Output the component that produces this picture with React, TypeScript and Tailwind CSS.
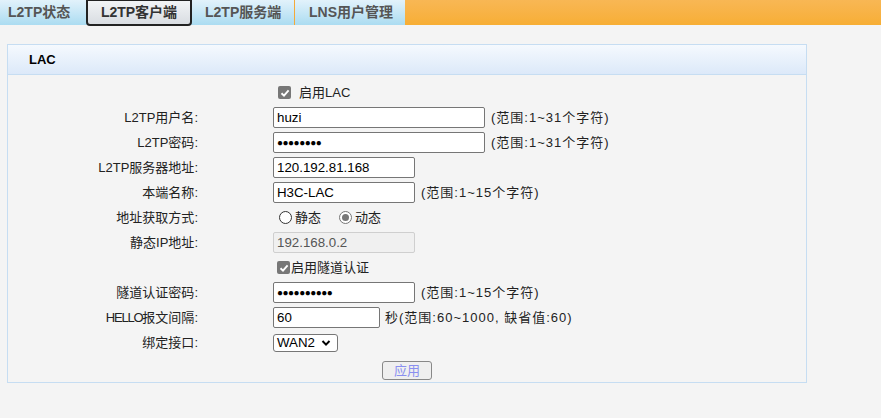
import React from 'react';

const font = "font-['Segoe_UI','Liberation_Sans','Noto_Sans_CJK_SC',sans-serif]";

const Check: React.FC = () => (
  <span className="w-[13px] h-[13px] rounded-[2px] bg-[#777] flex items-center justify-center shrink-0">
    <svg width="10" height="10" viewBox="0 0 10 10">
      <path d="M1.5 5.2 L4 7.6 L8.6 2.4" fill="none" stroke="#fff" strokeWidth="1.9" />
    </svg>
  </span>
);

const Radio: React.FC<{ on?: boolean }> = ({ on }) => (
  <span
    className={`w-[13px] h-[13px] rounded-full border bg-white flex items-center justify-center shrink-0 ${
      on ? 'border-[#777]' : 'border-[#333]'
    }`}
  >
    {on && <span className="w-[7px] h-[7px] rounded-full bg-[#777]" />}
  </span>
);

const Row: React.FC<{ label?: React.ReactNode; children: React.ReactNode }> = ({ label, children }) => (
  <div className="flex items-center h-[25px]">
    <div className="w-[191px] text-right text-[13px] text-[#222] pr-[1px]">
      {label ? <>{label}:</> : ''}
    </div>
    <div className="ml-[74px] flex items-center text-[13px] text-[#222]">{children}</div>
  </div>
);

const Input: React.FC<{ w: string; value: string; disabled?: boolean; pw?: boolean }> = ({
  w,
  value,
  disabled,
  pw,
}) => (
  <div
    className={`${w} h-[21px] border rounded-[2px] flex items-center px-[3px] text-[13.3px] ${
      disabled ? 'bg-[#f0f0f0] border-[#cfcfcf] text-[#555]' : 'bg-white border-[#767676] text-black'
    }`}
  >
    {pw ? <span className="tracking-[-0.5px] text-[10px] leading-none">{'●'.repeat(value.length)}</span> : value}
  </div>
);

const Hint: React.FC<{ text: string; ml?: string }> = ({ text, ml = 'ml-[6px]' }) => (
  <span className={`${ml} text-[13px] text-[#222] tracking-[1px]`}>{text}</span>
);

const tabs = ['L2TP状态', 'L2TP客户端', 'L2TP服务端', 'LNS用户管理'];

export default function App() {
  return (
    <div className={`w-[881px] h-[418px] bg-[#f4f4f4] ${font} overflow-hidden`}>
      {/* Tab bar */}
      <div className="h-[25px] bg-gradient-to-b from-[#f8b754] to-[#f7ae34] flex items-start">
        <div className="w-[85px] h-[25px] bg-gradient-to-b from-[#e2f2fb] to-[#abdcf1] flex items-center pl-[8px] text-[14px] font-bold text-[#555]">
          {tabs[0]}
        </div>
        <div className="w-[108px] h-[25px] bg-gradient-to-b from-[#e2f2fb] to-[#abdcf1]">
          <div className="mx-[1px] h-[27px] -mt-[1px] border-2 border-[#222] rounded-b-[4px] bg-gradient-to-b from-[#f2f4f6] to-[#d9dde2] flex items-center justify-center text-[14px] font-bold text-[#333]">
            {tabs[1]}
          </div>
        </div>
        <div className="w-[102px] h-[25px] bg-gradient-to-b from-[#e2f2fb] to-[#abdcf1] flex items-center pl-[12px] text-[14px] font-bold text-[#555] border-r border-[#f4a93a]">
          {tabs[2]}
        </div>
        <div className="w-[110px] h-[25px] bg-gradient-to-b from-[#e2f2fb] to-[#abdcf1] flex items-center pl-[14px] text-[14px] font-bold text-[#555]">
          {tabs[3]}
        </div>
      </div>

      {/* Panel */}
      <div className="ml-[7px] mt-[19px] w-[800px] h-[339px] border border-[#c6ddf2]">
        <div className="h-[30px] bg-gradient-to-b from-[#f5f9fe] to-[#dce9f9] border-b border-[#c6ddf2] flex items-center pl-[21px] text-[13px] font-bold text-black">
          LAC
        </div>
        <div className="pt-[5px]">
          <Row>
            <span className="ml-[5px]">
              <Check />
            </span>
            <span className="ml-[8px]">启用LAC</span>
          </Row>
          <Row label="L2TP用户名">
            <Input w="w-[212px]" value="huzi" />
            <Hint text="(范围:1~31个字符)" />
          </Row>
          <Row label="L2TP密码">
            <Input w="w-[212px]" value="••••••••" pw />
            <Hint text="(范围:1~31个字符)" />
          </Row>
          <Row label="L2TP服务器地址">
            <Input w="w-[142px]" value="120.192.81.168" />
          </Row>
          <Row label="本端名称">
            <Input w="w-[142px]" value="H3C-LAC" />
            <Hint text="(范围:1~15个字符)" />
          </Row>
          <Row label="地址获取方式">
            <span className="ml-[6px]">
              <Radio />
            </span>
            <span className="ml-[3px]">静态</span>
            <span className="ml-[18px]">
              <Radio on />
            </span>
            <span className="ml-[3px]">动态</span>
          </Row>
          <Row label="静态IP地址">
            <Input w="w-[142px]" value="192.168.0.2" disabled />
          </Row>
          <Row>
            <span className="ml-[4px]">
              <Check />
            </span>
            <span className="ml-[1px]">启用隧道认证</span>
          </Row>
          <Row label="隧道认证密码">
            <Input w="w-[142px]" value="••••••••••" pw />
            <Hint text="(范围:1~15个字符)" />
          </Row>
          <Row
            label={
              <>
                <span className="tracking-[-1.2px]">HELLO</span>报文间隔
              </>
            }
          >
            <Input w="w-[107px]" value="60" />
            <Hint ml="ml-[5px]" text="秒(范围:60~1000, 缺省值:60)" />
          </Row>
          <Row label="绑定接口">
            <div className="w-[65px] h-[18px] border border-[#767676] rounded-[3px] bg-white flex items-center pl-[3px] text-[13.3px] text-black">
              WAN2
              <svg className="ml-[6px]" width="10" height="8" viewBox="0 0 10 8">
                <path d="M1.5 2 L5 5.6 L8.5 2" fill="none" stroke="#000" strokeWidth="2" />
              </svg>
            </div>
          </Row>
          <div className="flex justify-center mt-[6px]">
            <button className="w-[50px] h-[19px] border border-[#888] rounded-[3px] bg-[#efefef] text-[13px] text-[#8a8ff0] leading-none">
              应用
            </button>
          </div>
        </div>
      </div>
    </div>
  );
}
